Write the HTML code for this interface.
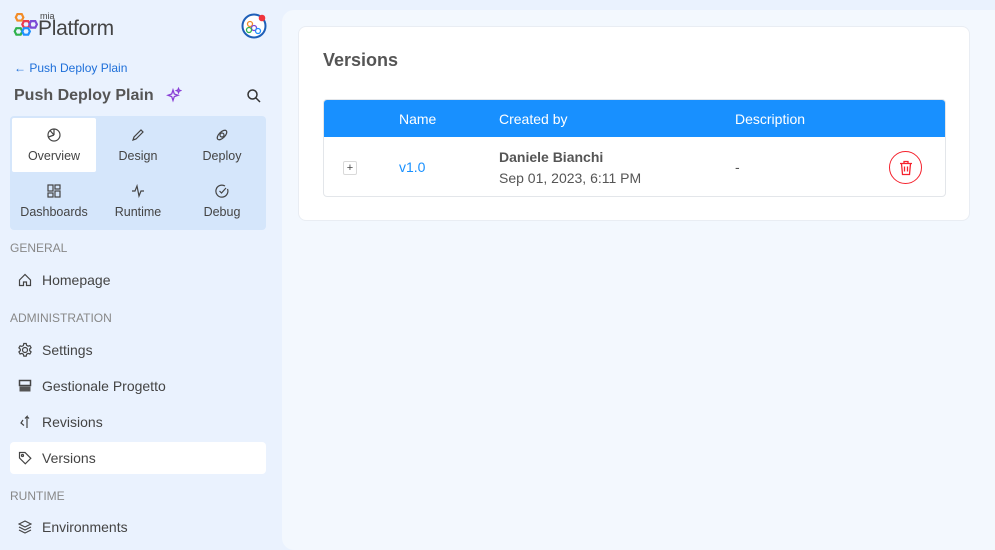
<!DOCTYPE html>
<html><head><meta charset="utf-8">
<style>
*{box-sizing:border-box;margin:0;padding:0}
body{width:995px;height:531px;overflow:hidden;background:#eaf2fe;font-family:"Liberation Sans",sans-serif;color:#444;position:relative}
.side{position:absolute;left:0;top:0;width:282px;height:531px}
.abs{position:absolute}
.main{position:absolute;left:282px;top:10px;width:730px;height:540px;background:#f3f8fe;border-radius:12px}
.card{position:absolute;left:298px;top:26px;width:672px;height:195px;background:#fff;border:1px solid #e9edf3;border-radius:8px}
.grid{position:absolute;left:10px;top:116px;width:256px;height:114px;background:#d5e6fb;border-radius:4px}
.tab{position:absolute;width:84px;height:54px;text-align:center;font-size:12.5px;color:#444}
.tab svg{display:block;margin:10px auto 7px}
.sec{position:absolute;left:10px;font-size:12px;color:#888}
.item{position:absolute;left:10px;width:256px;height:32px;border-radius:4px;font-size:14px;color:#444;line-height:32px;padding-left:32px}
.item svg{position:absolute;left:8px;top:9px}
</style></head><body>
<div class="side">
  <svg class="abs" style="left:12px;top:13px" width="26" height="26" viewBox="0 0 24 24">
    <g fill="none" stroke-width="2">
      <polygon points="5,1 9,1 10.5,4 9,7 5,7 3.5,4" stroke="#f28c28"/>
      <polygon points="11,7.5 15,7.5 16.5,10.5 15,13.5 11,13.5 9.5,10.5" stroke="#e8384f"/>
      <polygon points="17.5,7.5 21.5,7.5 23,10.5 21.5,13.5 17.5,13.5 16,10.5" stroke="#7b4ad6"/>
      <polygon points="4,14 8,14 9.5,17 8,20 4,20 2.5,17" stroke="#2fb24c"/>
      <polygon points="11,14 15,14 16.5,17 15,20 11,20 9.5,17" stroke="#1e90ff"/>
    </g>
  </svg>
  <div class="abs" style="left:40px;top:11px;font-size:9px;color:#444">mia</div>
  <div class="abs" style="left:38px;top:17px;font-size:21px;color:#444;letter-spacing:-0.3px">Platform</div>
  <svg class="abs" style="left:241px;top:13px" width="26" height="26" viewBox="0 0 26 26">
    <circle cx="13" cy="13" r="11.5" fill="#fff" stroke="#1e5fb8" stroke-width="2"/>
    <circle cx="9" cy="11" r="2.5" fill="none" stroke="#f28c28" stroke-width="1.3"/>
    <circle cx="13" cy="15" r="2.5" fill="none" stroke="#7b4ad6" stroke-width="1.3"/>
    <circle cx="8" cy="17" r="2.5" fill="none" stroke="#2fb24c" stroke-width="1.3"/>
    <circle cx="17" cy="18" r="2.5" fill="none" stroke="#1e90ff" stroke-width="1.3"/>
    <circle cx="21" cy="5" r="3.3" fill="#f0343c"/>
  </svg>
  <div class="abs" style="left:14px;top:61px;font-size:12px;color:#1e6fd9">← Push Deploy Plain</div>
  <div class="abs" style="left:14px;top:87px;font-size:16px;font-weight:bold;color:#555">Push Deploy Plain</div>
  <svg class="abs" style="left:166px;top:87px" width="16" height="16" viewBox="0 0 16 16" fill="none" stroke="#8a3fd6" stroke-width="1.3"><path d="M7 3 L8.3 7 L12 8.3 L8.3 9.6 L7 13.5 L5.7 9.6 L2 8.3 L5.7 7 Z"/><path d="M12.5 1.5 l.6 1.5 1.5.6 -1.5.6 -.6 1.5 -.6-1.5 -1.5-.6 1.5-.6z"/></svg>
  <svg class="abs" style="left:246px;top:88px" width="16" height="16" viewBox="0 0 16 16" fill="none" stroke="#333" stroke-width="1.5"><circle cx="6.5" cy="6.5" r="4.5"/><path d="M10 10 L14 14"/></svg>
  <div class="grid">
    <div class="tab" style="left:2px;top:2px;background:#fff;border-radius:2px">
      <svg width="14" height="14" viewBox="0 0 14 14" fill="none" stroke="#444" stroke-width="1.2"><circle cx="7" cy="7" r="6"/><path d="M7 7 L7 1 M7 7 L1.5 9 M7 7 L3 2.5"/></svg>Overview</div>
    <div class="tab" style="left:86px;top:2px"><svg width="14" height="14" viewBox="0 0 14 14" fill="none" stroke="#444" stroke-width="1.2"><path d="M2 12 L3 9 L10 2 L12 4 L5 11 Z"/></svg>Design</div>
    <div class="tab" style="left:170px;top:2px"><svg width="14" height="14" viewBox="0 0 14 14" fill="none" stroke="#444" stroke-width="1.2"><ellipse cx="7" cy="7" rx="6" ry="3" transform="rotate(-45 7 7)"/><circle cx="7" cy="7" r="2"/></svg>Deploy</div>
    <div class="tab" style="left:2px;top:58px"><svg width="14" height="14" viewBox="0 0 14 14" fill="none" stroke="#444" stroke-width="1.2"><rect x="1" y="1" width="5" height="6"/><rect x="8" y="1" width="5" height="4"/><rect x="1" y="9" width="5" height="4"/><rect x="8" y="7" width="5" height="6"/></svg>Dashboards</div>
    <div class="tab" style="left:86px;top:58px"><svg width="14" height="14" viewBox="0 0 14 14" fill="none" stroke="#444" stroke-width="1.2"><path d="M1 7 H4 L6 2 L8 12 L10 7 H13"/></svg>Runtime</div>
    <div class="tab" style="left:170px;top:58px"><svg width="14" height="14" viewBox="0 0 14 14" fill="none" stroke="#444" stroke-width="1.2"><path d="M12.5 5 A6 6 0 1 1 10 2"/><path d="M4.5 7 L6.5 9 L11 4"/></svg>Debug</div>
  </div>
  <div class="sec" style="top:241px">GENERAL</div>
  <div class="item" style="top:264px"><svg width="14" height="14" viewBox="0 0 14 14" fill="none" stroke="#444" stroke-width="1.2"><path d="M1.5 7 L7 1.5 L12.5 7 V12.5 H8.5 V9 H5.5 V12.5 H1.5 Z"/></svg>Homepage</div>
  <div class="sec" style="top:311px">ADMINISTRATION</div>
  <div class="item" style="top:334px"><svg width="16" height="16" viewBox="0 0 16 16" fill="none" stroke="#444" stroke-width="1.2" style="left:7px;top:8px"><circle cx="8" cy="8" r="2.5"/><path d="M6.8 1.5h2.4l.4 1.8 1.5.9 1.8-.6 1.2 2.1-1.4 1.2v1.8l1.4 1.2-1.2 2.1-1.8-.6-1.5.9-.4 1.8H6.8l-.4-1.8-1.5-.9-1.8.6-1.2-2.1 1.4-1.2V7.1L1.9 5.9l1.2-2.1 1.8.6 1.5-.9z"/></svg>Settings</div>
  <div class="item" style="top:370px"><svg width="14" height="14" viewBox="0 0 14 14"><rect x="1.5" y="1.5" width="11" height="5" fill="none" stroke="#444" stroke-width="1.5"/><rect x="1.5" y="7.5" width="11" height="5" fill="#555"/></svg>Gestionale Progetto</div>
  <div class="item" style="top:406px"><svg width="14" height="14" viewBox="0 0 14 14" fill="none" stroke="#444" stroke-width="1.2"><path d="M9 13 V1.5 L7 3.5 M9 1.5 L11 3.5 M5 5 L3 8 L6 10.5"/></svg>Revisions</div>
  <div class="item" style="top:442px;background:#fff"><svg width="14" height="14" viewBox="0 0 14 14" fill="none" stroke="#444" stroke-width="1.2"><path d="M1.5 1.5 H7 L12.8 7.3 L7.3 12.8 L1.5 7 Z"/><circle cx="4.5" cy="4.5" r="1"/></svg>Versions</div>
  <div class="sec" style="top:489px">RUNTIME</div>
  <div class="item" style="top:511px"><svg width="14" height="14" viewBox="0 0 14 14" fill="none" stroke="#444" stroke-width="1.2"><path d="M7 1 L13 4 L7 7 L1 4 Z M1 7 L7 10 L13 7 M1 10 L7 13 L13 10"/></svg>Environments</div>
</div>
<div class="main"></div>
<div class="card">
  <div class="abs" style="left:24px;top:23px;font-size:18px;font-weight:bold;color:#555">Versions</div>
  <div class="abs" style="left:24px;top:72px;width:623px;height:98px;border:1px solid #e3e6ea;border-radius:4px;overflow:hidden">
    <div class="abs" style="left:0;top:0;width:623px;height:37px;background:#1890ff;color:#fff;font-size:14px">
      <span class="abs" style="left:75px;top:11px">Name</span>
      <span class="abs" style="left:175px;top:11px">Created by</span>
      <span class="abs" style="left:411px;top:11px">Description</span>
    </div>
    <div class="abs" style="left:19px;top:61px;width:14px;height:14px;border:1px solid #d9d9d9;border-radius:2px;font-size:11px;line-height:12px;text-align:center;color:#444">+</div>
    <div class="abs" style="left:75px;top:59px;font-size:14px;color:#1890ff">v1.0</div>
    <div class="abs" style="left:175px;top:49px;font-size:14px;font-weight:bold;color:#555">Daniele Bianchi</div>
    <div class="abs" style="left:175px;top:70px;font-size:14px;color:#555">Sep 01, 2023, 6:11 PM</div>
    <div class="abs" style="left:411px;top:59px;font-size:14px;color:#555">-</div>
    <div class="abs" style="left:565px;top:51px;width:33px;height:33px;border:1px solid #f5222d;border-radius:50%">
      <svg class="abs" style="left:9px;top:8px" width="14" height="16" viewBox="0 0 14 16" fill="none" stroke="#f5222d" stroke-width="1.3"><path d="M1 3.5 H13 M5 3.5 V1.5 H9 V3.5 M2.5 3.5 L3.5 14.5 H10.5 L11.5 3.5 M5.5 6.5 V11.5 M8.5 6.5 V11.5"/></svg>
    </div>
  </div>
</div>
</body></html>
